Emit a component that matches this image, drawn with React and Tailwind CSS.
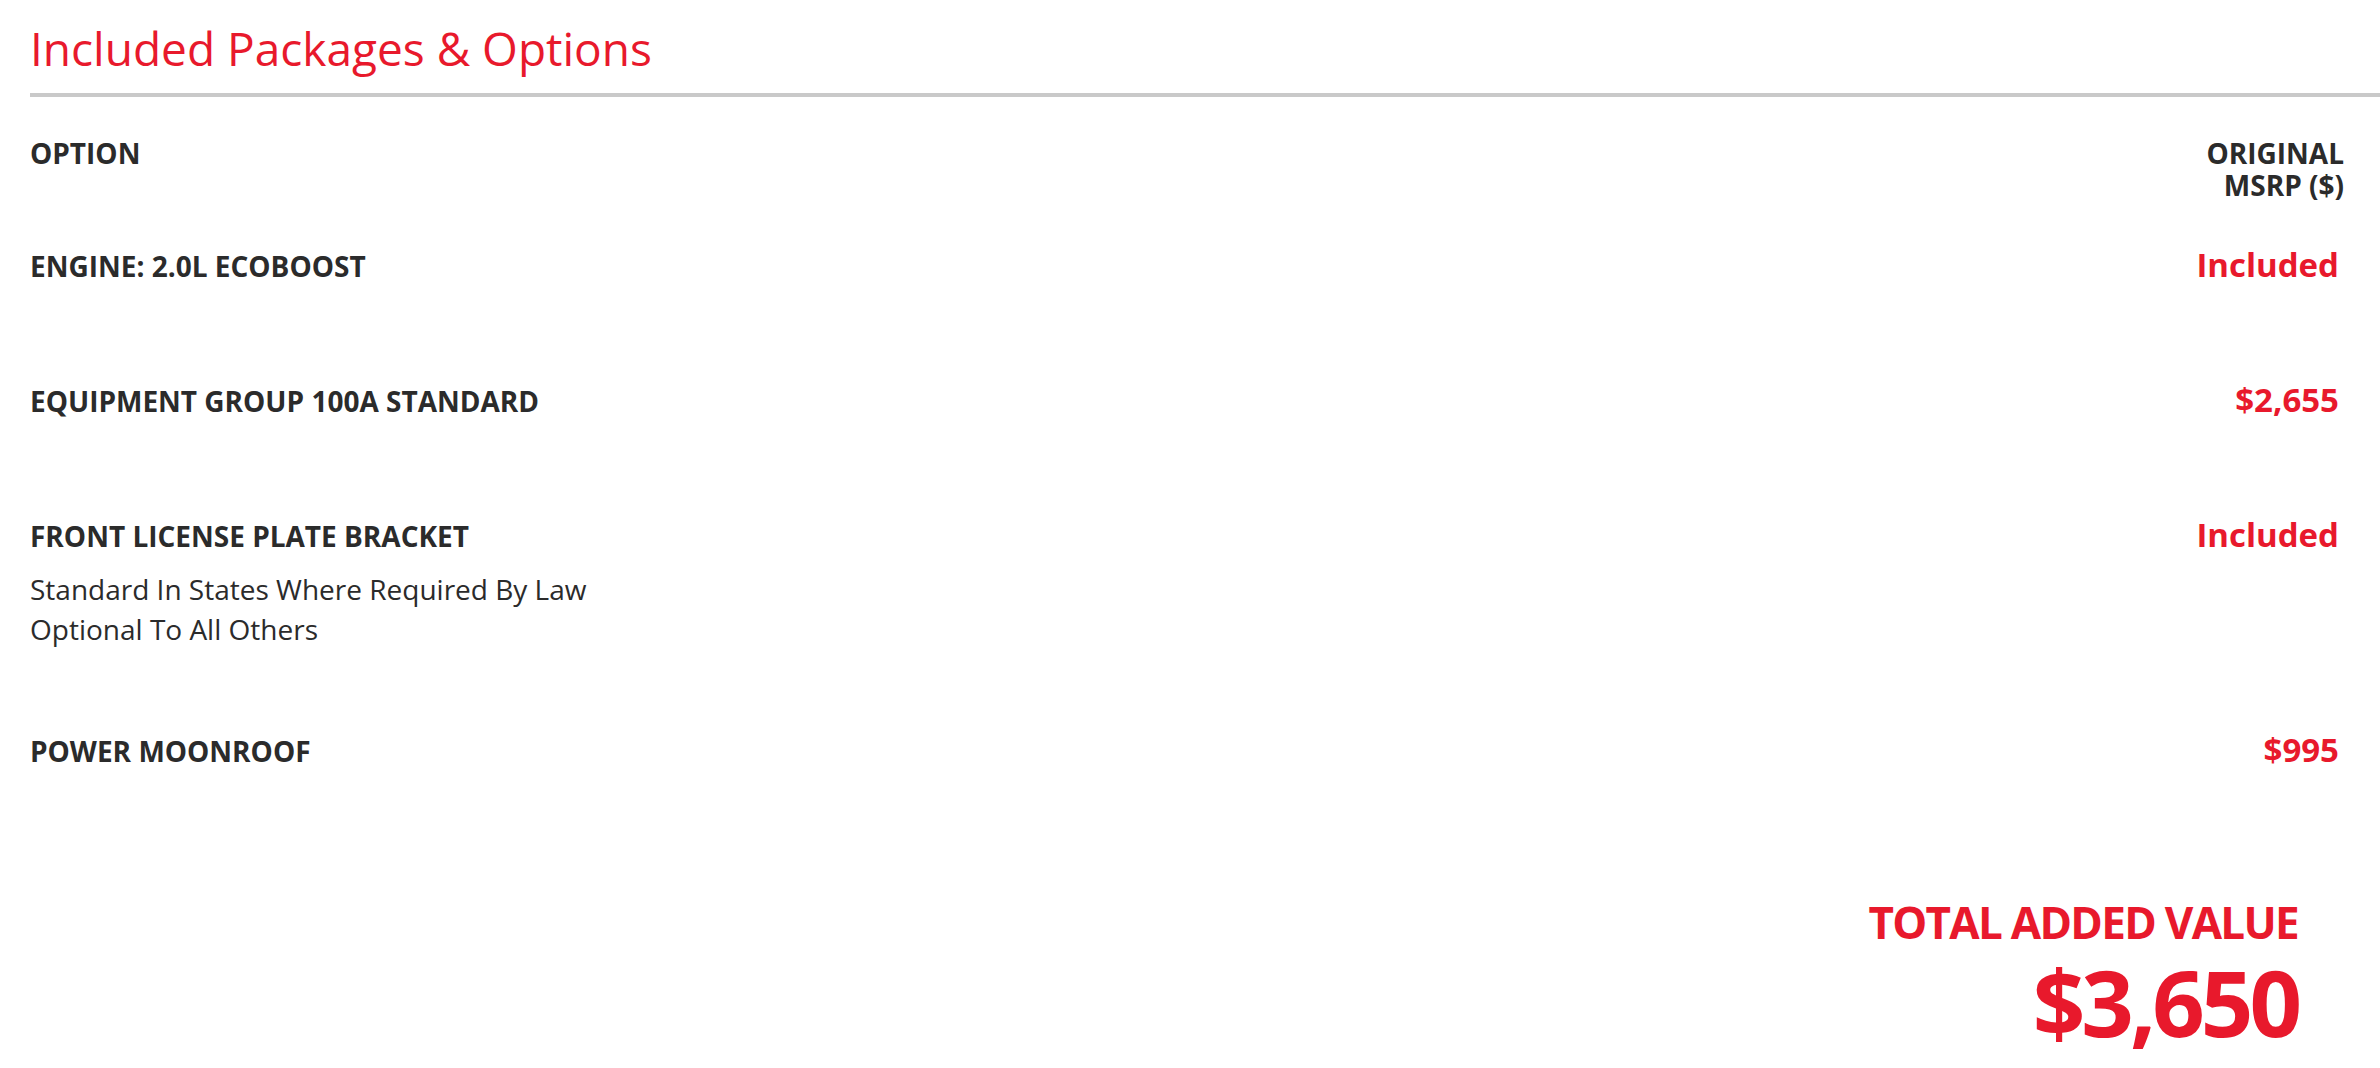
import React from "react";

const options = [
  { name: "ENGINE: 2.0L ECOBOOST", price: "Included" },
  { name: "EQUIPMENT GROUP 100A STANDARD", price: "$2,655" },
  {
    name: "FRONT LICENSE PLATE BRACKET",
    price: "Included",
    notes: ["Standard In States Where Required By Law", "Optional To All Others"],
  },
  { name: "POWER MOONROOF", price: "$995" },
];

const App = () => {
  return (
    <div className="min-h-screen bg-white pl-[30px] pt-[25px] font-['Open_Sans',sans-serif] text-[#2b2b2b]">
      <h2 className="text-[46px] leading-none font-normal text-[#e8192c]">Included Packages &amp; Options</h2>
      <div className="mt-[22px] h-[4px] bg-[#c9c9c9]" />

      <div className="pr-[36px]">
        <div className="mt-[40px] flex items-start justify-between">
          <div className="text-[28px] font-bold leading-[32px]">OPTION</div>
          <div className="text-right text-[28px] font-bold leading-[32px]">
            ORIGINAL
            <br />
            MSRP ($)
          </div>
        </div>

        <div className="mt-[48px]">
          {options.map((item) => (
            <div key={item.name} className="flex min-h-[135px] items-baseline justify-between pb-[85px]">
              <div>
                <div className="text-[28px] font-bold leading-[32px]">{item.name}</div>
                {item.notes && (
                  <div className="mt-[17px] text-[28px] leading-[40px]">
                    {item.notes.map((n) => (
                      <div key={n}>{n}</div>
                    ))}
                  </div>
                )}
              </div>
              <div className="pr-[5px] text-[33px] font-bold leading-[32px] text-[#e8192c]">{item.price}</div>
            </div>
          ))}
        </div>
      </div>

      <div className="mt-[27px] flex justify-end pr-[82px]">
        <div className="text-right font-bold text-[#e8192c]">
          <div className="text-[44px] leading-[52px] tracking-[-1.7px]">TOTAL ADDED VALUE</div>
          <div className="mt-[6px] text-[92px] leading-[96px] tracking-[-4px]">$3,650</div>
        </div>
      </div>
    </div>
  );
};

export default App;
